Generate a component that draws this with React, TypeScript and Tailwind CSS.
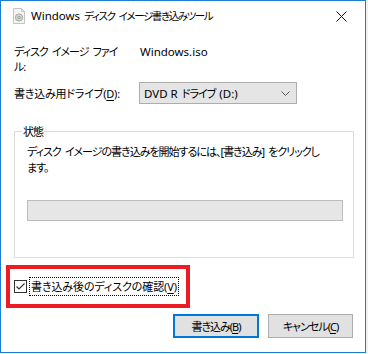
import type { ReactNode } from 'react'

const font = "font-['Noto_Sans','Noto_Sans_CJK_JP',sans-serif] [font-feature-settings:'palt']"

function Key({ children }: { children: ReactNode }) {
  return <span className="underline decoration-1 underline-offset-[2px]">{children}</span>
}

// latin runs keep normal size and spacing; the CJK text around them is squeezed
function L({ children }: { children: ReactNode }) {
  return <span className="text-[11.5px] tracking-normal">{children}</span>
}

function Gap() {
  return <span className="inline-block w-[4px]" />
}

function DiscIcon() {
  return (
    <svg width="14" height="16" viewBox="0 0 14 16">
      <path d="M1.5 0.5h8l3 3v12h-11z" fill="#f4f4f4" stroke="#c4c4c4" />
      <path d="M9.5 0.5v3h3" fill="none" stroke="#c4c4c4" />
      <circle cx="7" cy="9.5" r="3.6" fill="#d6d6d6" stroke="#a9a9a9" />
      <circle cx="7" cy="9.5" r="1.6" fill="#8fb08a" />
      <circle cx="7" cy="9.5" r="0.6" fill="#f4f4f4" />
    </svg>
  )
}

function CloseIcon() {
  return (
    <svg width="11" height="11" viewBox="0 0 11 11">
      <path d="M0.5 0.5l10 10M10.5 0.5l-10 10" stroke="#111" strokeWidth="1" />
    </svg>
  )
}

function Chevron() {
  return (
    <svg width="9" height="5" viewBox="0 0 9 5">
      <path d="M0.5 0.5l4 4 4-4" fill="none" stroke="#555" strokeWidth="1" />
    </svg>
  )
}

function CheckBox() {
  return (
    <svg width="13" height="13" viewBox="0 0 13 13" className="shrink-0">
      <rect x="0.5" y="0.5" width="12" height="12" fill="#fff" stroke="#333" />
      <path d="M2.5 6.5l2.5 2.5 5.5-5.5" fill="none" stroke="#333" strokeWidth="1.1" />
    </svg>
  )
}

function App() {
  return (
    <div
      className={`h-[354px] w-[368px] bg-[#f2f2f2] text-[11px] leading-[15px] tracking-[-1px] text-black ${font}`}
    >
      <div className="flex h-[353px] w-[366px] flex-col border border-[#1a7fd4] bg-white">
        <div className="flex h-[30px] items-center pl-[11px] pr-[9px]">
          <DiscIcon />
          <span className="ml-[5px] whitespace-nowrap text-[10.5px] tracking-[-1.4px]">
            <L>Windows</L>
            <Gap />
            ディスク
            <Gap />
            イメージ書き込みツール
          </span>
          <div className="ml-auto flex h-[30px] w-[30px] items-center justify-center">
            <CloseIcon />
          </div>
        </div>

        <div className="flex flex-col pl-[13px] pr-[11px]">
          <div className="mt-[13px] flex">
            <div className="w-[125px] whitespace-nowrap">
              ディスク
              <Gap />
              イメージ
              <Gap />
              ファイ
              <br />
              ル:
            </div>
            <div className="pl-px">
              <L>Windows.iso</L>
            </div>
          </div>

          <div className="mt-[8px] flex items-center">
            <div className="w-[125px] whitespace-nowrap tracking-[-0.2px]">
              書き込み用ドライブ(<Key>D</Key>):
            </div>
            <div className="flex h-[22px] w-[158px] items-center justify-between border border-[#adadad] bg-[#e5e5e5] pl-[4px] pr-[6px]">
              <span className="whitespace-nowrap">
                <L>DVD R</L>
                <Gap />
                ドライブ
                <Gap />
                <L>(D:)</L>
              </span>
              <Chevron />
            </div>
          </div>

          <div className="relative mt-[27px] w-[340px] border border-[#dcdcdc] pb-[36px] pl-[12px] pt-[12px]">
            <span className="absolute -top-[8px] left-[7px] bg-white px-[1px]">状態</span>
            <div className="whitespace-nowrap leading-[16px]">
              ディスク
              <Gap />
              イメージの書き込みを開始するには、[書き込み]
              <Gap />
              をクリックし
              <br />
              ます。
            </div>
            <div className="mt-[24px] h-[21px] w-[316px] border border-[#bcbcbc] bg-[#e6e6e6]" />
          </div>

          <div className="-ml-[8px] mt-[7px] flex h-[43px] w-[184px] items-center border-4 border-[#ec1c24] pl-[4px]">
            <CheckBox />
            <div className="ml-[2px] flex h-[19px] items-center whitespace-nowrap border border-dotted border-black px-[1px] tracking-[-0.1px]">
              書き込み後のディスクの確認(<Key>V</Key>)
            </div>
          </div>

          <div className="mt-[6px] flex justify-end gap-[9px] pr-[1px]">
            <button
              type="button"
              className="flex h-[24px] w-[86px] items-center justify-center whitespace-nowrap border-2 border-[#0078d7] bg-[#e1e1e1]"
            >
              書き込み(<Key>B</Key>)
            </button>
            <button
              type="button"
              className="flex h-[24px] w-[85px] items-center justify-center whitespace-nowrap border border-[#adadad] bg-[#e1e1e1]"
            >
              キャンセル(<Key>C</Key>)
            </button>
          </div>
        </div>
      </div>
    </div>
  )
}

export default App
